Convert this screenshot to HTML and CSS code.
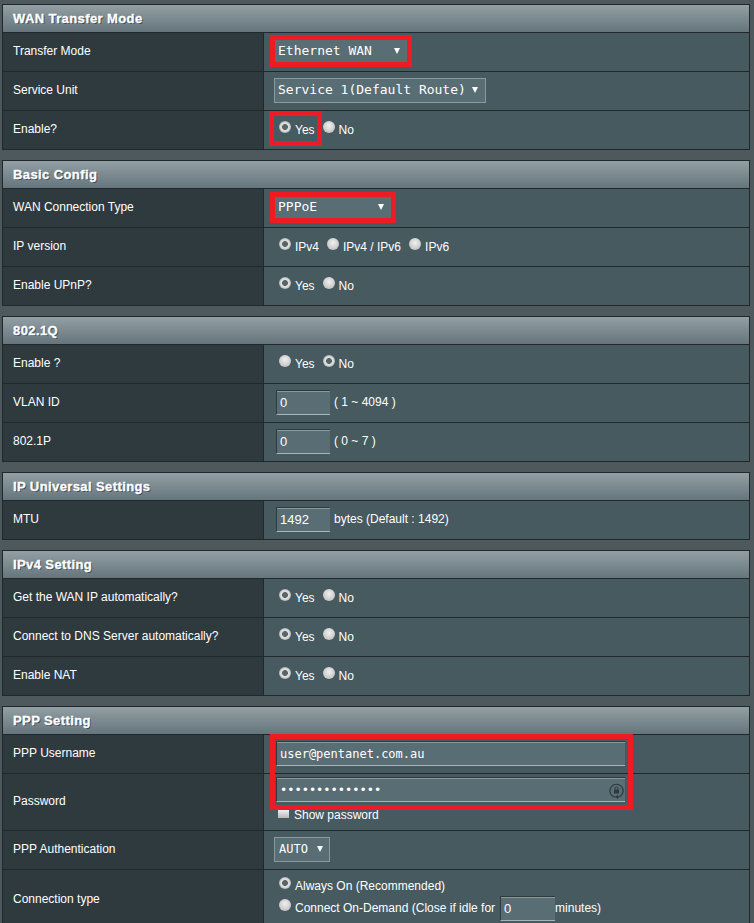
FILE: index.html
```html
<!DOCTYPE html>
<html lang="en">
<head>
<meta charset="utf-8">
<title>WAN settings</title>
<link rel="stylesheet" href="styles.css">
</head>
<body>
<main class="page">

<section class="panel">
  <h2 class="head">WAN Transfer Mode</h2>
  <div class="row"><div class="label">Transfer Mode</div><div class="value"><span class="sel sel-eth"><select class="sel-ctl"><option>Ethernet WAN</option></select></span></div></div>
  <div class="row"><div class="label">Service Unit</div><div class="value"><span class="sel sel-svc"><select class="sel-ctl"><option>Service 1(Default Route)</option></select></span></div></div>
  <div class="row"><div class="label">Enable?</div><div class="value radios"><label class="opt"><input class="radio" type="radio" name="a" checked>Yes</label><label class="opt"><input class="radio" type="radio" name="a">No</label></div></div>
</section>

<section class="panel">
  <h2 class="head">Basic Config</h2>
  <div class="row"><div class="label">WAN Connection Type</div><div class="value"><span class="sel sel-type"><select class="sel-ctl"><option>PPPoE</option></select></span></div></div>
  <div class="row"><div class="label">IP version</div><div class="value radios"><label class="opt"><input class="radio" type="radio" name="b" checked>IPv4</label><label class="opt"><input class="radio" type="radio" name="b">IPv4 / IPv6</label><label class="opt"><input class="radio" type="radio" name="b">IPv6</label></div></div>
  <div class="row"><div class="label">Enable UPnP?</div><div class="value radios"><label class="opt"><input class="radio" type="radio" name="c" checked>Yes</label><label class="opt"><input class="radio" type="radio" name="c">No</label></div></div>
</section>

<section class="panel">
  <h2 class="head">802.1Q</h2>
  <div class="row"><div class="label">Enable ?</div><div class="value radios"><label class="opt"><input class="radio" type="radio" name="d">Yes</label><label class="opt"><input class="radio" type="radio" name="d" checked>No</label></div></div>
  <div class="row"><div class="label">VLAN ID</div><div class="value"><input class="field field-short" value="0"><span class="hint">( 1 ~ 4094 )</span></div></div>
  <div class="row"><div class="label">802.1P</div><div class="value"><input class="field field-short" value="0"><span class="hint">( 0 ~ 7 )</span></div></div>
</section>

<section class="panel">
  <h2 class="head">IP Universal Settings</h2>
  <div class="row"><div class="label">MTU</div><div class="value"><input class="field field-short" value="1492"><span class="hint">bytes (Default : 1492)</span></div></div>
</section>

<section class="panel">
  <h2 class="head">IPv4 Setting</h2>
  <div class="row"><div class="label">Get the WAN IP automatically?</div><div class="value radios"><label class="opt"><input class="radio" type="radio" name="e" checked>Yes</label><label class="opt"><input class="radio" type="radio" name="e">No</label></div></div>
  <div class="row"><div class="label">Connect to DNS Server automatically?</div><div class="value radios"><label class="opt"><input class="radio" type="radio" name="f" checked>Yes</label><label class="opt"><input class="radio" type="radio" name="f">No</label></div></div>
  <div class="row"><div class="label">Enable NAT</div><div class="value radios"><label class="opt"><input class="radio" type="radio" name="g" checked>Yes</label><label class="opt"><input class="radio" type="radio" name="g">No</label></div></div>
</section>

<section class="panel">
  <h2 class="head">PPP Setting</h2>
  <div class="row"><div class="label">PPP Username</div><div class="value"><input class="field field-long" value="user@pentanet.com.au"></div></div>
  <div class="row row-pass"><div class="label">Password</div>
    <div class="value value-stack">
      <span class="pass-wrap"><input class="field field-long" type="password" value="abcdefghijklmn">
        <svg class="lock" viewBox="0 0 15 16" width="15" height="16" aria-hidden="true"><path d="M3.4 13A6.6 6.6 0 1 1 11.6 13" fill="none" stroke="#2f3a3e" stroke-width="1.2"/><path d="M11.6 13A6.6 6.6 0 0 1 9 14.2" fill="none" stroke="#2f3a3e" stroke-width="1.2"/><path d="M3.4 13A6.6 6.6 0 0 0 6.5 14.2" fill="none" stroke="#2f3a3e" stroke-width="1.2"/><path d="M9 11.8V16L6.2 14Z" fill="#2f3a3e"/><rect x="5" y="6.6" width="5" height="4" rx=".6" fill="#2f3a3e"/><path d="M6 6.8V5.4a1.5 1.5 0 0 1 3 0v1.4" fill="none" stroke="#2f3a3e" stroke-width="1"/></svg>
      </span>
      <label class="show"><input class="check" type="checkbox">Show password</label>
    </div></div>
  <div class="row"><div class="label">PPP Authentication</div><div class="value"><span class="sel sel-auth"><select class="sel-ctl sel-small"><option>AUTO</option></select></span></div></div>
  <div class="row row-conn"><div class="label">Connection type</div>
    <div class="value value-conn">
      <label class="opt opt-line"><input class="radio" type="radio" name="h" checked>Always On (Recommended)</label>
      <label class="opt opt-line"><input class="radio" type="radio" name="h">Connect On-Demand (Close if idle for <input class="field field-idle" value="0">minutes)</label>
    </div></div>
</section>

<div class="mark mark-mode"></div>
<div class="mark mark-enable"></div>
<div class="mark mark-type"></div>
<div class="mark mark-ppp"></div>
</main>
</body>
</html>
```

FILE: styles.css
```css
html, body {
  margin: 0;
  height: 923px;
  overflow: hidden;
  background: #4d595d;
}
.page {
  position: relative;
  padding: 4px 4px 0 2px;
  display: flex;
  flex-direction: column;
  gap: 10px;
  font: 12px "Liberation Sans", Arial, sans-serif;
  color: #fff;
}
.panel {
  border: 1px solid #20282b;
  background: #475a5f;
}
.head {
  margin: 0;
  height: 27px;
  line-height: 28px;
  padding-left: 10px;
  font-size: 13px;
  font-weight: bold;
  letter-spacing: .4px;
  color: #fff;
  -webkit-text-stroke: .3px #fff;
  text-shadow: 1px 1px 0 #3c4a4f;
  background: linear-gradient(#92a0a5, #66757c);
  border-bottom: 1px solid #20282b;
}
.row {
  display: grid;
  grid-template-columns: 261px 1fr;
  min-height: 38px;
  border-bottom: 1px solid #20282b;
}
.row:last-child { border-bottom: 0; }
.label {
  display: flex;
  align-items: center;
  padding-left: 10px;
  background: #2f3a3e;
  border-right: 1px solid #20282b;
  padding-bottom: 2px;
}
.value {
  display: flex;
  align-items: center;
  padding-left: 10px;
  padding-bottom: 1px;
  min-width: 0;
}
.radios { gap: 8px; padding-left: 15px; padding-bottom: 0; }
.opt { display: inline-flex; align-items: center; }
.radio {
  appearance: none;
  width: 12px;
  height: 12px;
  margin: 0 4px 0 0;
  position: relative;
  top: -3px;
  border-radius: 50%;
  background: radial-gradient(circle at 50% 40%, #f0f0f0, #c4c4c4 75%, #8e9a9c);
}
.radio:checked {
  background: radial-gradient(circle, #5b6467 0 2.6px, #dcdcdc 3.2px 4.4px, #aab2b3 6px);
}
.sel { position: relative; display: inline-block; }
.sel::after {
  content: "";
  position: absolute;
  top: 9px;
  right: 8px;
  border-left: 3px solid transparent;
  border-right: 3px solid transparent;
  border-top: 6px solid #fff;
}
.sel-ctl {
  appearance: none;
  display: block;
  width: 100%;
  height: 25px;
  margin: 0;
  padding: 0 0 2px 3px;
  border: 1px solid #8b999d;
  background: #596d74;
  color: #fff;
  font: 13px "DejaVu Sans Mono", monospace;
}
.sel-small { font-size: 12px; padding-left: 4px; }
.sel-eth { width: 134px; }
.sel-svc { width: 212px; }
.sel-type { width: 118px; }
.sel-auth { width: 56px; }
.sel-auth::after { right: 7px; }
.field {
  box-sizing: border-box;
  height: 25px;
  margin: 0;
  padding: 0 0 0 3px;
  border-style: solid;
  border-width: 1px 0 1px 1px;
  border-color: #2f3a3e #596d74 #a9b5b8 #2f3a3e;
  box-shadow: inset 0 1px 0 #8b999d;
  background: #596d74;
  color: #fff;
  font: 12px "DejaVu Sans Mono", monospace;
  outline: 0;
}
.field-short { width: 54px; margin-left: 2px; font: 13px "Liberation Sans", Arial, sans-serif; }
.field-long { width: 349px; margin-left: 2px; }
.field-idle { width: 55px; margin: 0 0 0 5px; font: 13px "Liberation Sans", Arial, sans-serif; }
.hint { margin-left: 4px; padding-bottom: 1px; }
.row-pass { min-height: 56px; }
.value-stack {
  flex-direction: column;
  align-items: flex-start;
  padding-top: 3px;
}
.pass-wrap { position: relative; display: block; }
.lock { position: absolute; top: 6px; right: 1px; }
.show { display: inline-flex; align-items: center; margin: 6px 0 0 4px; }
.check {
  appearance: none;
  width: 11px;
  height: 8px;
  margin: 0 5px 0 0;
  position: relative;
  top: -1px;
  background: linear-gradient(#f0f0f0, #b8b8b8);
}
.row-conn { min-height: 60px; }
.value-conn {
  flex-direction: column;
  align-items: flex-start;
  padding-left: 15px;
  padding-top: 5px;
  gap: 0;
}
.opt-line { height: 22px; }
.mark {
  position: absolute;
  box-sizing: border-box;
  border: 5px solid #ed1c24;
}
.mark-mode { left: 270px; top: 35px; width: 142px; height: 32px; }
.mark-enable { left: 269px; top: 111px; width: 53px; height: 35px; }
.mark-type { left: 270px; top: 192px; width: 126px; height: 31px; }
.mark-ppp { left: 270px; top: 734px; width: 363px; height: 76px; }
```
